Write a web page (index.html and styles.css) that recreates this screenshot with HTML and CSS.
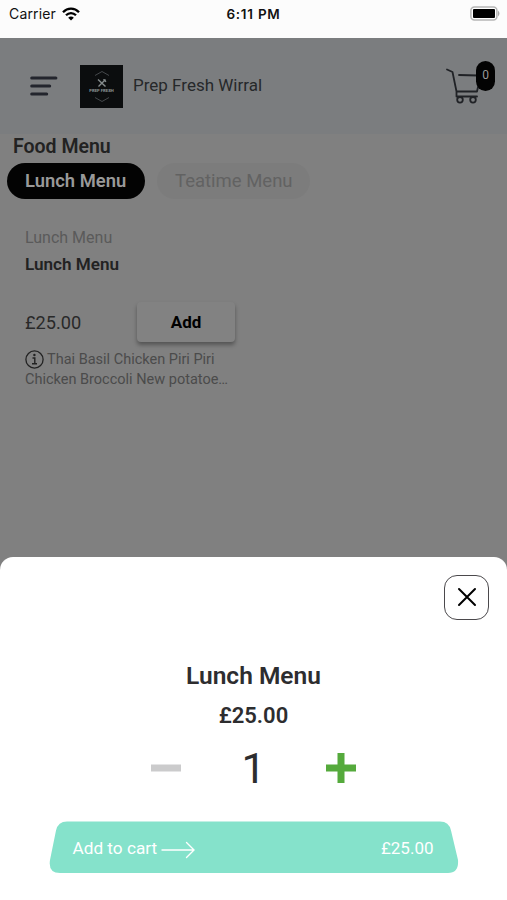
FILE: index.html
```html
<!DOCTYPE html>
<html lang="en">
<head>
<meta charset="utf-8">
<meta name="viewport" content="width=device-width, initial-scale=1">
<title>Prep Fresh Wirral</title>
<link rel="stylesheet" href="styles.css">
</head>
<body>
<div class="screen">
  <div class="status">
    <div class="carrier"><span>Carrier</span>
      <svg width="18" height="14" viewBox="0 0 18 14" fill="none" stroke="#000" stroke-width="2.3"><path d="M1 5.200C5.500.5 12.500.5 17 5.200M4 8.300c2.900-2.900 7.100-2.900 10 0"/><path d="M9 13.500 6.200 10.700c1.600-1.500 4-1.500 5.600 0z" fill="#000" stroke="none"/></svg>
    </div>
    <time class="clock">6:11 PM</time>
    <svg class="battery" width="31" height="15" viewBox="0 0 31 15"><rect x=".9" y=".9" width="26" height="13" rx="3.500" fill="#fff" stroke="#b5b5b5" stroke-width="1.500"/><rect x="3" y="3" width="22" height="9" rx="1" fill="#000"/><path d="M28 4.500q3 3 0 6z" fill="#aaa"/></svg>
  </div>
  <header class="header">
    <svg class="burger" width="28" height="20" viewBox="0 0 28 20" stroke="#23252d" stroke-width="3" stroke-linecap="round"><path d="M1.700 1.900h24.200M1.700 10h18M1.700 18h15"/></svg>
    <div class="logo">
      <svg width="24" height="7" viewBox="0 0 24 7" fill="none" stroke="#53575a" stroke-width=".8"><path d="M5 5.500 12 1.500l7 4"/></svg>
      <svg width="10" height="8" viewBox="0 0 10 8" fill="none" stroke="#858c8d" stroke-width="1.400"><path d="m1 .5 7.500 7M8.500.5 1.500 7.500M6.500.3l2.500 2.500"/></svg>
      <span class="logo-name">PREP FRESH</span>
      <svg width="24" height="9" viewBox="0 0 24 9" fill="none" stroke="#53575a" stroke-width=".8"><path d="M5 3.500l7 4 7-4"/></svg>
    </div>
    <span class="shop">Prep Fresh Wirral</span>
    <div class="cart">
      <svg width="38" height="36" viewBox="0 0 38 36" fill="none" stroke="#202226" stroke-width="1.800" stroke-linecap="round" stroke-linejoin="round"><path d="M1 1.500 6.500 4 10.500 23.500H31L32 19M13 7l19 .5M10.500 23.500V28.500H31"/><circle cx="14" cy="31.800" r="2.800"/><circle cx="27" cy="31.800" r="2.800"/></svg>
      <span class="badge">0</span>
    </div>
  </header>
  <main class="content">
    <h1 class="title">Food Menu</h1>
    <nav class="tabs"><span class="tab active"><b>Lunch Menu</b></span><span class="tab"><span>Teatime Menu</span></span></nav>
    <article class="item">
      <div class="category">Lunch Menu</div>
      <h2 class="name">Lunch Menu</h2>
      <div class="buy"><span class="price">£25.00</span><button class="add">Add</button></div>
      <div class="desc"><div class="line">
        <svg width="19" height="19" viewBox="0 0 19 19" fill="none" stroke="#222"><circle cx="9.500" cy="9.500" r="8.600" stroke-width="1.300"/><path d="M7.500 8h2.300v5.500M7 13.700h5" stroke-width="1.400"/><circle cx="9.400" cy="5" r="1.200" fill="#222" stroke="none"/></svg>
        <span class="d1">Thai Basil Chicken Piri Piri</span></div>
        <div class="line"><span class="d2">Chicken Broccoli New potatoe…</span></div>
      </div>
    </article>
  </main>
  <section class="sheet">
    <button class="close" aria-label="Close"><svg width="20" height="20" viewBox="0 0 20 20" stroke="#000" stroke-width="2" stroke-linecap="round"><path d="m2 2 16 16M18 2 2 18"/></svg></button>
    <h2 class="sheet-name">Lunch Menu</h2>
    <div class="sheet-price">£25.00</div>
    <div class="stepper">
      <svg width="30" height="30" viewBox="0 0 30 30"><path d="M0 11.500h30v7H0z" fill="#cbcbcc"/></svg>
      <span class="qty">1</span>
      <svg width="30" height="30" viewBox="0 0 30 30"><path d="M11.500 0h7v11.500H30v7H18.500V30h-7V18.500H0v-7h11.500z" fill="#55aa3c"/></svg>
    </div>
    <div class="checkout">
      <svg class="shape" width="410" height="53" viewBox="0 0 410 53"><path d="M18 .5H391q9 0 11 9L409 39q1 13-10 13H11Q-1 52 1 39L7 9.500Q9 .5 18 .5z" fill="#85e2cb"/></svg>
      <span class="cta">Add to cart</span>
      <svg class="arrow" width="34" height="18" viewBox="0 0 34 18" fill="none" stroke="#fff" stroke-width="1.400" stroke-linecap="round"><path d="M1 9h32M25.500 1.500 33 9l-7.500 7.500"/></svg>
      <span class="total">£25.00</span>
    </div>
  </section>
</div>
</body>
</html>
```

FILE: styles.css
```css
* { box-sizing: border-box; }
body { margin: 0; font-family: Roboto, sans-serif; color: #222; }
h1, h2 { margin: 0; }
button { padding: 0; border: 0; font-family: inherit; }
svg { display: block; flex: none; }
span, b, h1, h2, time { white-space: nowrap; }
.screen { width: 507px; height: 900px; background: #808080; display: flex; flex-direction: column; overflow: hidden; }
.status { height: 38px; flex: none; background: #fcfcfc; display: grid; grid-template-columns: 1fr auto 1fr; align-items: start; padding: 5px 6px 0 9px; font-family: Inter, sans-serif; font-size: 14px; line-height: 18px; color: #111; }
.carrier { display: flex; gap: 6px; align-items: center; }
.carrier span { letter-spacing: .15px; }
.clock { font-weight: 600; letter-spacing: .75px; font-size: 13.5px; margin-right: 3px; }
.battery { justify-self: end; margin-top: 1px; }
.header { height: 96px; flex: none; background: #7b7d7f; display: flex; align-items: center; padding: 0 12px 0 30px; }
.logo { width: 43px; height: 43px; margin-left: 22px; background: #0b0d0e; display: flex; flex-direction: column; align-items: center; padding-top: 5px; }
.logo svg + svg { margin-top: 2px; }
.logo-name { font-size: 4.2px; line-height: 6px; font-weight: 900; color: #858c8d; margin-top: 1px; }
.shop { margin: -2px 0 0 10px; font-size: 17px; color: #26282a; }
.cart { position: relative; width: 49px; height: 36px; margin-left: auto; }
.badge { position: absolute; right: 0; top: -7px; width: 19px; height: 30px; border-radius: 10px; background: #030303; color: #999; font-size: 12px; line-height: 29px; text-align: center; }
.content { flex: 1; min-height: 0; }
.title { margin: 0 0 0 13px; font-size: 19.5px; line-height: 25px; font-weight: 600; }
.tabs { display: flex; gap: 12px; padding: 4px 7px 0; }
.tab { height: 36px; padding: 0 18px; border-radius: 18px; background: #7c7c7c; color: #626262; font-size: 18.5px; line-height: 36px; width: 153px; }
.tab.active { width: 138px; background: #030303; color: #999; font-size: 18.4px; }
.tab b { font-weight: 600; }
.item { width: 212px; margin: 28px 0 0 25px; }
.category { font-size: 16px; line-height: 22px; color: #5a5a5a; }
.name { font-size: 17.1px; line-height: 22px; margin-top: 4px; font-weight: 600; }
.buy { display: flex; justify-content: space-between; align-items: center; margin-top: 27px; }
.price { font-size: 18.2px; color: #292929; }
.add { width: 98px; height: 40px; margin-right: 2px; background: #828282; border-radius: 4px; box-shadow: 0 3px 4px rgba(0,0,0,.35); font-size: 17px; font-weight: 700; color: #000; }
.desc { margin-top: 7px; font-size: 14.5px; color: #4b4b4b; }
.line { display: flex; align-items: center; gap: 3px; height: 20.5px; }
.sheet { height: 343px; flex: none; background: #fff; border-radius: 13px 13px 0 0; display: flex; flex-direction: column; align-items: center; color: #2d2d2f; }
.close { align-self: flex-end; width: 45px; height: 45px; margin: 18px 18px 0 0; padding-bottom: 1px; border: 1.5px solid #4b494c; border-radius: 13px; background: #fff; display: flex; align-items: center; justify-content: center; flex: none; }
.sheet-name { margin-top: 41px; font-size: 24.5px; line-height: 30px; font-weight: 600; }
.sheet-price { margin-top: 12px; font-size: 22px; line-height: 26px; font-weight: 600; }
.stepper { width: 206px; height: 54px; margin-top: 12px; display: flex; align-items: center; justify-content: space-between; }
.qty { font-size: 43px; line-height: 54px; }
.checkout { position: relative; width: 410px; height: 53px; margin-top: 26px; padding: 0 25px 0 24px; display: flex; align-items: center; color: #fff; font-size: 17px; }
.shape { position: absolute; inset: 0; }
.cta, .arrow, .total { position: relative; }
.cta { font-size: 17.2px; }
.arrow { margin: 4px 0 0 4px; }
.total { margin-left: auto; }
```
